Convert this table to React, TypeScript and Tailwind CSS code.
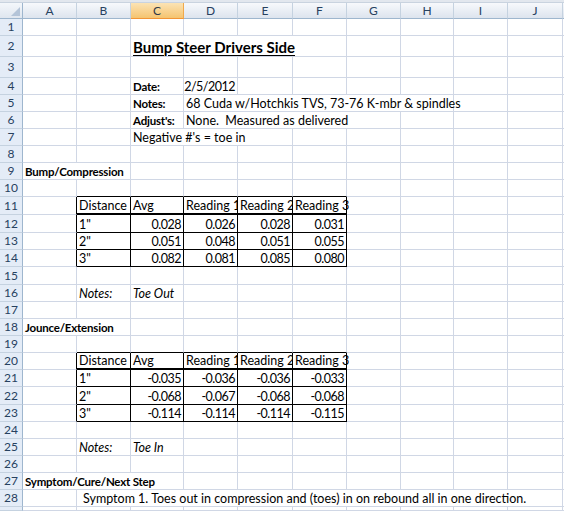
import React from "react";

// column widths (A..J) and header letters
const COLW = [
  "w-[54px]",
  "w-[54px]",
  "w-[53px]",
  "w-[54px]",
  "w-[55px]",
  "w-[54px]",
  "w-[54px]",
  "w-[53px]",
  "w-[54px]",
  "w-[55px]",
];
const LETTERS = ["A", "B", "C", "D", "E", "F", "G", "H", "I", "J"];
const GRID =
  "grid grid-cols-[23px_54px_54px_53px_54px_55px_54px_54px_53px_54px_55px_1fr]";

const SPAN: Record<number, string> = {
  1: "",
  2: "col-span-2",
  3: "col-span-3",
  4: "col-span-4",
  5: "col-span-5",
  6: "col-span-6",
  7: "col-span-7",
  8: "col-span-8",
  9: "col-span-9",
};

const HEIGHT: Record<number, string> = {
  4: "h-[4px]",
  17: "h-[17px]",
  18: "h-[18px]",
  21: "h-[21px]",
};

type Cell = {
  c: number;
  t: string;
  span?: number;
  right?: boolean;
  bold?: boolean;
  italic?: boolean;
  title?: boolean;
  clip?: boolean;
  indent?: boolean;
};
type Row = { n: number; h: number; cells: Cell[] };

const tableHead = (): Cell[] => [
  { c: 1, t: "Distance" },
  { c: 2, t: "Avg" },
  { c: 3, t: "Reading 1", clip: true },
  { c: 4, t: "Reading 2", clip: true },
  { c: 5, t: "Reading 3" },
];

const dataRow = (dist: string, vals: string[]): Cell[] => [
  { c: 1, t: dist },
  ...vals.map((v, i) => ({ c: i + 2, t: v, right: true })),
];

const ROWS: Row[] = [
  { n: 1, h: 17, cells: [] },
  { n: 2, h: 21, cells: [{ c: 2, span: 4, t: "Bump Steer Drivers Side", title: true }] },
  { n: 3, h: 21, cells: [] },
  {
    n: 4,
    h: 17,
    cells: [
      { c: 2, t: "Date:", bold: true },
      { c: 3, t: "2/5/2012", right: true },
    ],
  },
  {
    n: 5,
    h: 17,
    cells: [
      { c: 2, t: "Notes:", bold: true },
      { c: 3, span: 5, t: "68 Cuda w/Hotchkis TVS, 73-76 K-mbr & spindles" },
    ],
  },
  {
    n: 6,
    h: 17,
    cells: [
      { c: 2, t: "Adjust's:", bold: true },
      { c: 3, span: 4, t: "None.  Measured as delivered" },
    ],
  },
  { n: 7, h: 17, cells: [{ c: 2, span: 3, t: "Negative #'s = toe in" }] },
  { n: 8, h: 17, cells: [] },
  { n: 9, h: 17, cells: [{ c: 0, span: 2, t: "Bump/Compression", bold: true }] },
  { n: 10, h: 17, cells: [] },
  { n: 11, h: 18, cells: tableHead() },
  { n: 12, h: 18, cells: dataRow('1"', ["0.028", "0.026", "0.028", "0.031"]) },
  { n: 13, h: 17, cells: dataRow('2"', ["0.051", "0.048", "0.051", "0.055"]) },
  { n: 14, h: 17, cells: dataRow('3"', ["0.082", "0.081", "0.085", "0.080"]) },
  { n: 15, h: 18, cells: [] },
  {
    n: 16,
    h: 17,
    cells: [
      { c: 1, t: "Notes:", italic: true },
      { c: 2, t: "Toe Out", italic: true },
    ],
  },
  { n: 17, h: 17, cells: [] },
  { n: 18, h: 17, cells: [{ c: 0, span: 2, t: "Jounce/Extension", bold: true }] },
  { n: 19, h: 17, cells: [] },
  { n: 20, h: 17, cells: tableHead() },
  { n: 21, h: 17, cells: dataRow('1"', ["-0.035", "-0.036", "-0.036", "-0.033"]) },
  { n: 22, h: 18, cells: dataRow('2"', ["-0.068", "-0.067", "-0.068", "-0.068"]) },
  { n: 23, h: 17, cells: dataRow('3"', ["-0.114", "-0.114", "-0.114", "-0.115"]) },
  { n: 24, h: 17, cells: [] },
  {
    n: 25,
    h: 17,
    cells: [
      { c: 1, t: "Notes:", italic: true },
      { c: 2, t: "Toe In", italic: true },
    ],
  },
  { n: 26, h: 17, cells: [] },
  { n: 27, h: 17, cells: [{ c: 0, span: 3, t: "Symptom/Cure/Next Step", bold: true }] },
  {
    n: 28,
    h: 17,
    cells: [
      {
        c: 1,
        span: 9,
        indent: true,
        t: "Symptom 1. Toes out in compression and (toes) in on rebound all in one direction.",
      },
    ],
  },
  { n: 29, h: 4, cells: [] },
];

const TABLE_ROWS = [11, 12, 13, 14, 20, 21, 22, 23];
const HEAD_ROWS = [11, 20];
const inTable = (r: number, c: number) => TABLE_ROWS.includes(r) && c >= 1 && c <= 5;

function cellBorders(r: number, c: number, span: number) {
  const last = c + span - 1;
  let right = "border-r border-r-[#d0d7e5]";
  if (inTable(r, last) || inTable(r, last + 1)) right = "border-r border-r-black";
  let bottom = "border-b border-b-[#d0d7e5]";
  if (inTable(r, c)) {
    bottom = HEAD_ROWS.includes(r) ? "border-b-2 border-b-black" : "border-b border-b-black";
  } else if (inTable(r + 1, c)) {
    bottom = "border-b border-b-black";
  }
  return `${right} ${bottom}`;
}

function textClass(cell: Cell) {
  if (cell.title)
    return "text-[15px] font-bold underline decoration-1 underline-offset-2 leading-[17px]";
  if (cell.bold) return "text-[11.5px] font-bold tracking-[-0.2px] leading-[15px]";
  if (cell.right) return "text-[12.5px] tracking-[-0.5px] leading-[15px]";
  return `text-[12.5px] leading-[15px] ${cell.italic ? "italic" : ""}`;
}

function SheetRow({ row }: { row: Row }) {
  const out: React.ReactNode[] = [];
  let c = 0;
  while (c < 10) {
    const cell = row.cells.find((x) => x.c === c);
    const span = cell?.span ?? 1;
    out.push(
      <div
        key={c}
        className={`${SPAN[span]} box-border flex items-end px-[2px] ${
          cell?.right ? "justify-end" : "justify-start"
        } ${cell?.clip || cell?.right ? "overflow-hidden" : "overflow-visible"} ${
          cell?.indent ? "pl-[6px]" : ""
        } ${cellBorders(row.n, c, span)}`}
      >
        {cell && <span className={`whitespace-pre ${textClass(cell)}`}>{cell.t}</span>}
      </div>
    );
    c += span;
  }
  return (
    <div className={`${GRID} ${HEIGHT[row.h]}`}>
      <div className="box-border flex items-center justify-center overflow-hidden border-r border-r-[#9eb6ce] border-b border-b-[#c5d2e0] bg-[#e4ecf7] text-[12px] leading-none text-[#27415f]">
        {row.h > 4 ? row.n : null}
      </div>
      {out}
      <div className="border-b border-b-[#d0d7e5]" />
    </div>
  );
}

export default function App() {
  return (
    <div className="w-[564px] h-[511px] overflow-hidden bg-white text-black font-['Lato','Liberation_Sans',sans-serif]">
      <div className="h-[3px] bg-[#e2e7ee] border-b border-b-[#c9d3df]" />
      <div className={`${GRID} h-[16px]`}>
        <div className="relative box-border border-r border-r-[#9eb6ce] border-b border-b-[#9eb6ce] bg-gradient-to-b from-[#f4f7fb] to-[#dfe6ef]">
          <div className="absolute right-[2px] bottom-[2px] w-0 h-0 border-l-[9px] border-l-transparent border-b-[9px] border-b-[#b4c4d8]" />
        </div>
        {LETTERS.map((l, i) => (
          <div
            key={l}
            className={`${COLW[i]} box-border flex items-center justify-center text-[12px] leading-none ${
              i === 2
                ? "bg-gradient-to-b from-[#fbe3b4] to-[#f5c46f] border-r border-r-[#f0a94c] border-b border-b-[#f29536] text-[#2f3a48]"
                : "bg-gradient-to-b from-[#f7f9fc] to-[#dde4ee] border-r border-r-[#c5d2e0] border-b border-b-[#9eb6ce] text-[#27415f]"
            }`}
          >
            {l}
          </div>
        ))}
        <div className="bg-gradient-to-b from-[#f7f9fc] to-[#dde4ee] border-b border-b-[#9eb6ce]" />
      </div>
      {ROWS.map((r) => (
        <SheetRow key={r.n} row={r} />
      ))}
    </div>
  );
}
